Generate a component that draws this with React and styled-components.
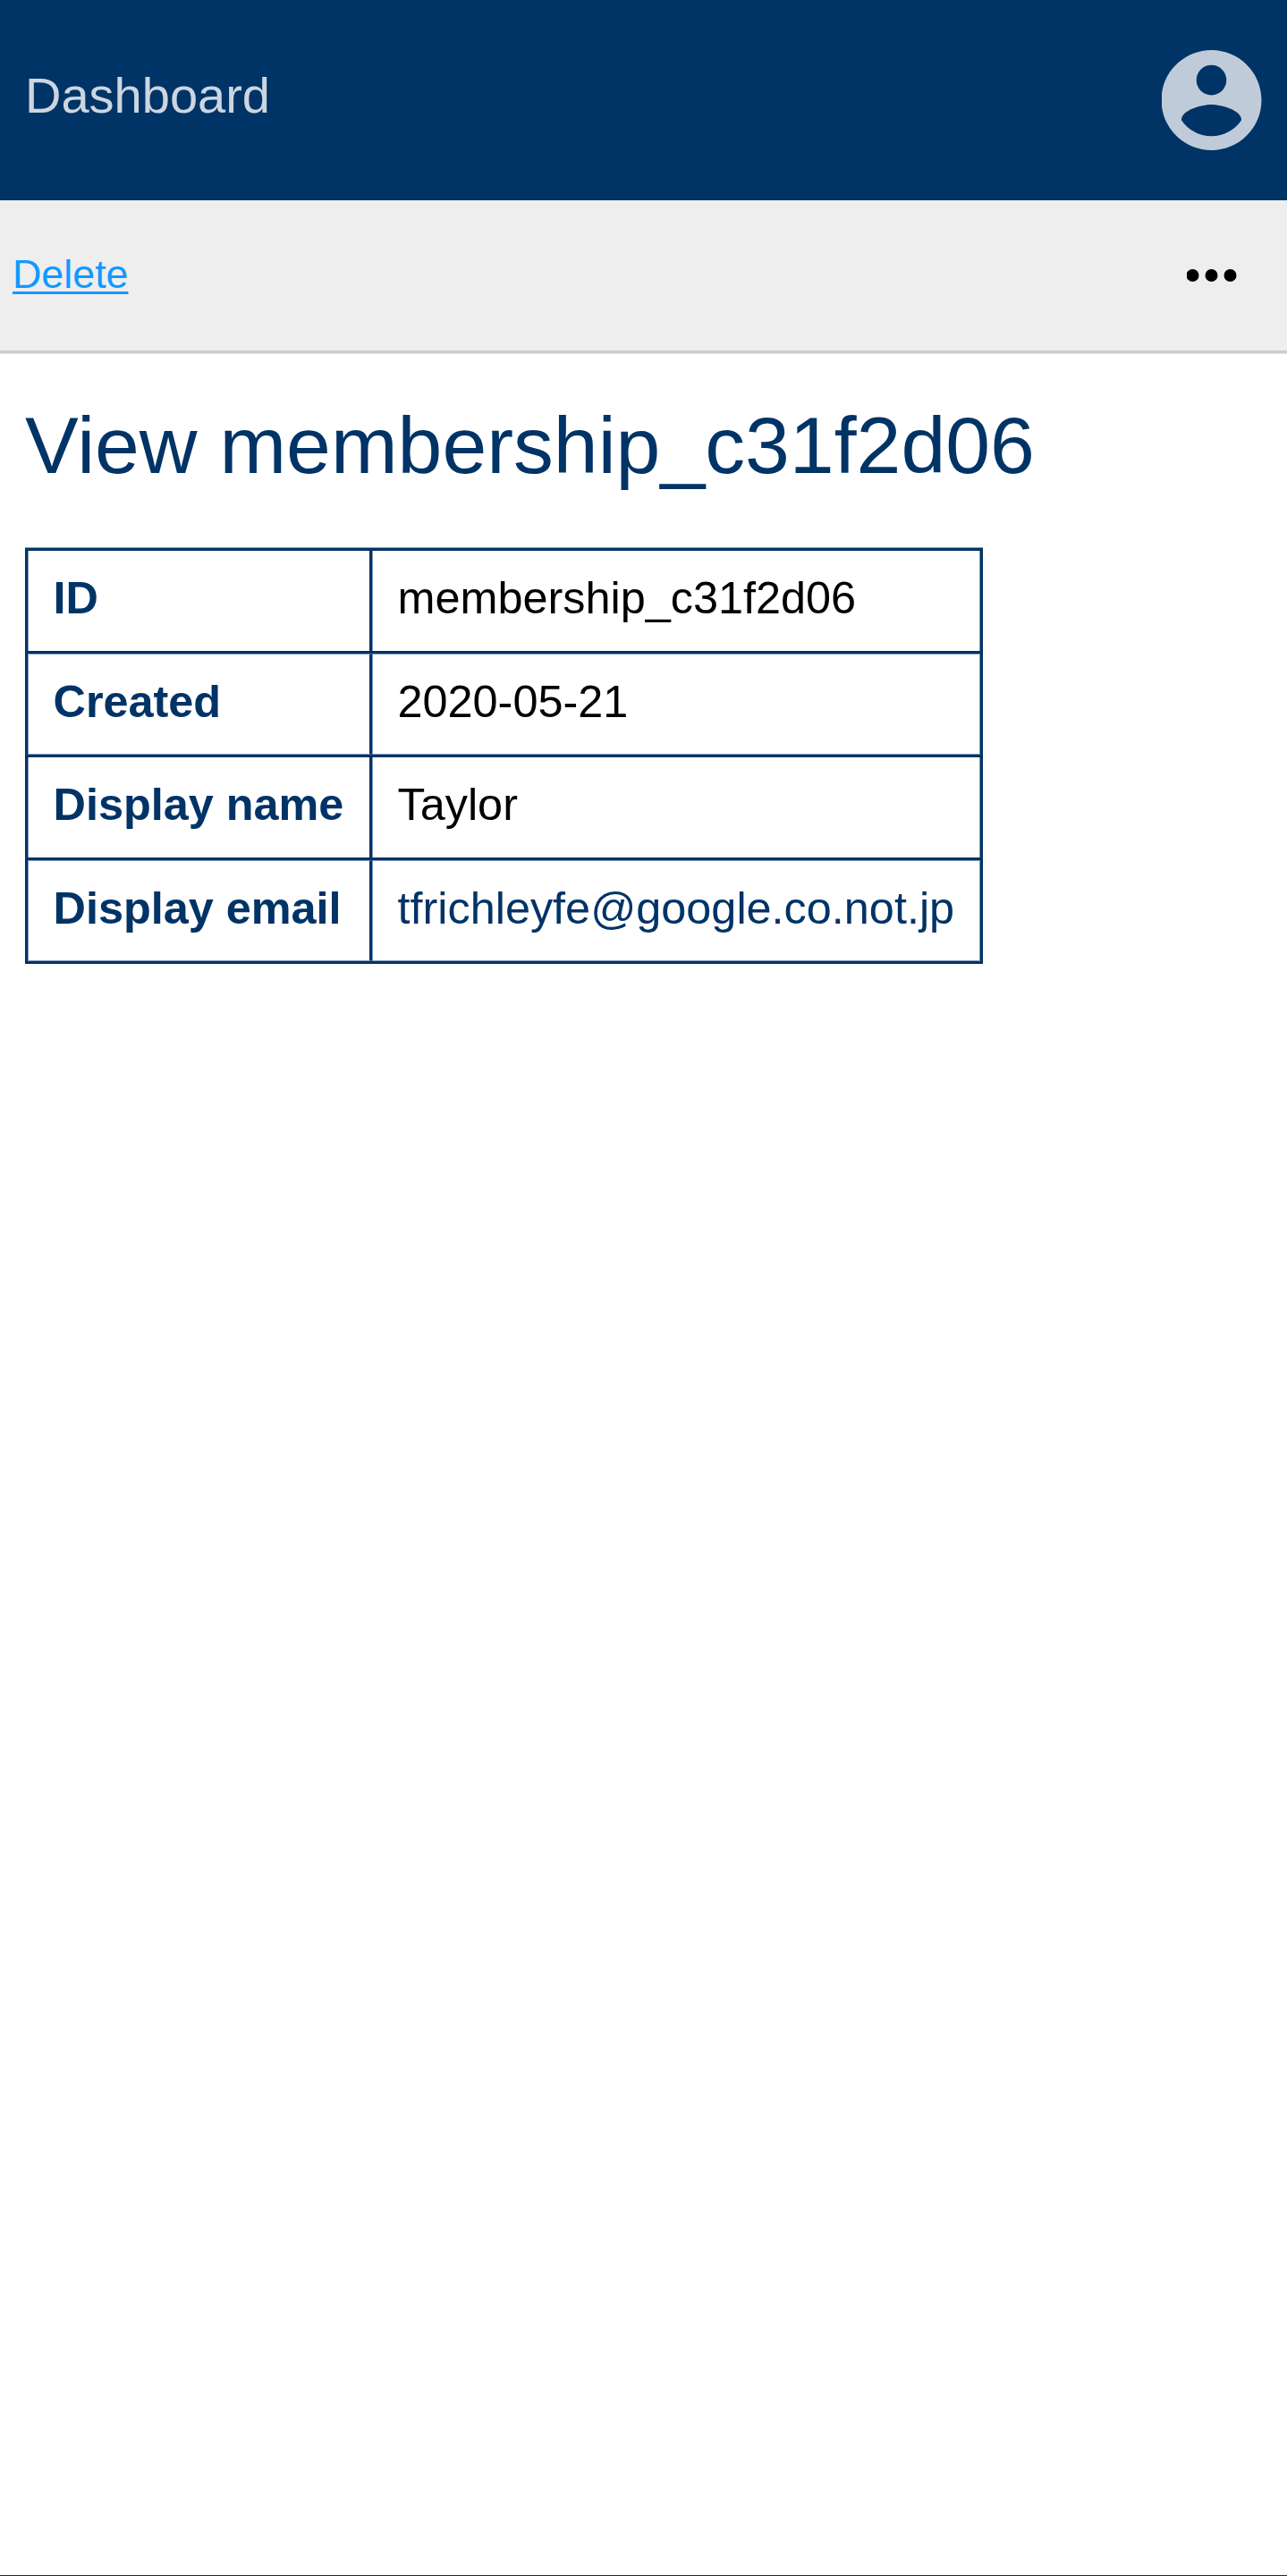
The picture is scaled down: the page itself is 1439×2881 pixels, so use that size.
import React from "react";
import styled, { createGlobalStyle } from "styled-components";

const navy = "#003366";
const hairline = "#8099b3";

const GlobalStyle = createGlobalStyle`
  *, *::before, *::after { box-sizing: border-box; }
  body {
    margin: 0;
    background: #fff;
    color: #000;
    font-family: "Liberation Sans", Arial, sans-serif;
  }
`;

const Page = styled.div`
  display: flex;
  flex-direction: column;
  height: 2881px;
  overflow: hidden;
  border-bottom: 1px solid ${navy};
`;

const Header = styled.header`
  display: flex;
  flex: none;
  align-items: flex-start;
  justify-content: space-between;
  height: 224px;
  padding: 56px 28px 0;
  background: ${navy};
`;

const HomeLink = styled.a`
  padding-top: 19px;
  color: rgba(255, 255, 255, 0.8);
  font-size: 56px;
  line-height: 63px;
  text-decoration: none;
`;

const Avatar = styled.svg`
  display: block;
  width: 112px;
  height: 112px;
  fill: rgba(255, 255, 255, 0.75);
`;

const Toolbar = styled.nav`
  display: flex;
  flex: none;
  align-items: center;
  justify-content: space-between;
  height: 171px;
  padding: 0 56px 0 14px;
  border-bottom: 3px solid #cccccc;
  background: #eeeeee;
  box-shadow: 0 1px #e5e5e5;
`;

const DeleteLink = styled.a`
  padding-bottom: 4px;
  color: #1199ff;
  font-size: 44.8px;
  line-height: 50px;
  text-decoration: underline;
  text-decoration-thickness: 3px;
  text-underline-offset: 4px;
`;

const Dots = styled.svg`
  display: block;
  width: 56px;
  height: 14px;
`;

const Content = styled.main`
  padding: 51px 28px 0;
`;

const Title = styled.h1`
  margin: 0 0 63px;
  color: ${navy};
  font-size: 89.6px;
  font-weight: 400;
  line-height: 104px;
`;

const Table = styled.div`
  width: 1071px;
  border: 3px solid ${navy};
  box-shadow: 0 -1px ${hairline};
`;

const Row = styled.div`
  display: flex;
  height: ${(p) => p.$height}px;
  border-bottom: ${(p) => (p.$last ? 0 : 3)}px solid ${navy};
`;

const Cell = styled.div`
  padding: 24px 0 0 28.5px;
  color: ${(p) => p.$color || "#000"};
  font-size: 50.4px;
  line-height: 57px;
  white-space: nowrap;
  border-top: ${(p) => (p.$soft ? 1 : 0)}px solid ${hairline};
  border-bottom: ${(p) => (p.$soft ? 1 : 0)}px solid ${hairline};
`;

const Label = styled(Cell)`
  width: 385px;
  font-weight: 700;
  border-right: 3px solid ${navy};
  box-shadow: inset 1px 0 ${hairline};
`;

const Value = styled(Cell)`
  flex: 1;
  box-shadow: inset 1px 0 ${hairline}, inset -1px 0 ${hairline};
`;

const rows = [
  { label: "ID", value: "membership_c31f2d06", height: 115 },
  { label: "Created", value: "2020-05-21", height: 116, soft: true },
  { label: "Display name", value: "Taylor", height: 115 },
  { label: "Display email", value: "tfrichleyfe@google.co.not.jp", height: 113, soft: true, color: navy },
];

export default function App() {
  return (
    <>
      <GlobalStyle />
      <Page>
        <Header>
          <HomeLink>Dashboard</HomeLink>
          <Avatar viewBox="2.0893 2 20 20">
            <path d="M12 2C6.48 2 2 6.48 2 12s4.48 10 10 10 10-4.48 10-10S17.52 2 12 2zm0 3c1.66 0 3 1.34 3 3s-1.34 3-3 3-3-1.34-3-3 1.34-3 3-3zm0 14.2c-2.5 0-4.71-1.28-6-3.22.03-1.99 4-3.08 6-3.08 1.99 0 5.97 1.09 6 3.08-1.29 1.94-3.5 3.22-6 3.22z" />
          </Avatar>
        </Header>
        <Toolbar>
          <DeleteLink>Delete</DeleteLink>
          <Dots viewBox="0.5 0 56 14">
            <circle cx="7" cy="7" r="7" />
            <circle cx="28" cy="7" r="7" />
            <circle cx="49" cy="7" r="7" />
          </Dots>
        </Toolbar>
        <Content>
          <Title>View membership_c31f2d06</Title>
          <Table>
            {rows.map((r, i) => (
              <Row key={r.label} $height={r.height} $last={i === rows.length - 1}>
                <Label $color={navy} $soft={r.soft}>
                  {r.label}
                </Label>
                <Value $color={r.color} $soft={r.soft}>
                  {r.value}
                </Value>
              </Row>
            ))}
          </Table>
        </Content>
      </Page>
    </>
  );
}
